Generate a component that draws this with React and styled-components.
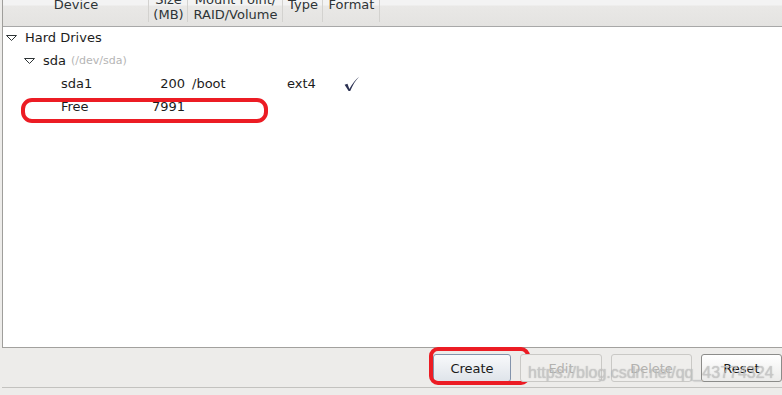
import styled, { createGlobalStyle } from "styled-components";

const GlobalStyle = createGlobalStyle`
  html, body {
    margin: 0;
    padding: 0;
    background: #edecea;
  }
  body {
    font-family: "DejaVu Sans", "Liberation Sans", sans-serif;
    font-size: 13px;
    color: #1c1c1c;
  }
`;

const columns = [
    { key: "device", title: ["Device"], width: 146 },
    { key: "size", title: ["Size", "(MB)"], width: 39 },
    { key: "mount", title: ["Mount Point/", "RAID/Volume"], width: 95 },
    { key: "type", title: ["Type"], width: 40 },
    { key: "format", title: ["Format"], width: 57 },
];

const rows = [
    { level: 0, name: "Hard Drives", open: true },
    { level: 1, name: "sda", note: "(/dev/sda)", open: true },
    { level: 2, name: "sda1", size: "200", mount: "/boot", type: "ext4", format: true },
    { level: 2, name: "Free", size: "7991", marked: true },
];

const buttons = [
    { label: "Create", kind: "focus", width: 78, marked: true },
    { label: "Edit", kind: "off", width: 82 },
    { label: "Delete", kind: "off", width: 81 },
    { label: "Reset", kind: "normal", width: 81 },
];

export default function App() {
    return (
        <Page>
            <GlobalStyle />
            <TreePanel>
                <Header>
                    {columns.map((c) => (
                        <HeaderCell key={c.key} w={c.width} stacked={c.title.length > 1}>
                            <HeaderLabel>
                                {c.title.map((t) => <span key={t}>{t}</span>)}
                            </HeaderLabel>
                        </HeaderCell>
                    ))}
                    <HeaderFill />
                </Header>
                <Rows>
                    {rows.map((r) => (
                        <Row key={r.name}>
                            <DeviceCell level={r.level}>
                                {r.open ? (
                                    <Expander viewBox="0 0 11 6">
                                        <polygon points="0.5,0.5 10.5,0.5 5.5,5.5" fill="none" stroke="#2e3436" strokeWidth="1" />
                                    </Expander>
                                ) : <Spacer />}
                                <span>{r.name}</span>
                                {r.note && <Note>{r.note}</Note>}
                            </DeviceCell>
                            <SizeCell>{r.size}</SizeCell>
                            <TextCell>{r.mount}</TextCell>
                            <TextCell>{r.type}</TextCell>
                            <CheckCell>
                                {r.format && (
                                    <svg width="17" height="16" viewBox="0 0 16 15">
                                        <path d="M1.5 8.2 L4.2 7.2 L6 12.3 C8.5 7.5 11.5 3.5 15.2 0.6 C11.8 4 9 8.5 6.8 14.2 L5.3 14.2 Z" fill="#2b3152" />
                                    </svg>
                                )}
                            </CheckCell>
                            {r.marked && <Marker />}
                        </Row>
                    ))}
                </Rows>
            </TreePanel>
            <ButtonBar>
                {buttons.map((b) => (
                    <ActionButton key={b.label} kind={b.kind} w={b.width} disabled={b.kind === "off"}>
                        {b.label}
                        {b.marked && <ButtonMarker />}
                    </ActionButton>
                ))}
                <Watermark>https://blog.csdn.net/qq_43774324</Watermark>
            </ButtonBar>
            <BottomRule />
        </Page>
    );
}

const Page = styled.div`
width: 782px;
height: 395px;
overflow: hidden;
display: flex;
flex-direction: column;
`;

const TreePanel = styled.div`
margin-left: 2px;
height: 348px;
box-sizing: border-box;
border-left: 1px solid #9f9e9b;
border-bottom: 1px solid #a2a19e;
background: #ffffff;
overflow: hidden;
flex-shrink: 0;
`;

const Header = styled.div`
display: flex;
height: 44px;
margin-top: -17px;
box-sizing: border-box;
border-bottom: 1px solid #a8a8a8;
background: linear-gradient(#f3f3f3 0, #f3f3f3 22px, #e9e8e6 23px, #e4e3e1 100%);
color: #2e3436;
`;

const HeaderCell = styled.div`
width: ${(p) => p.w}px;
flex-shrink: 0;
position: relative;
display: flex;
align-items: ${(p) => (p.stacked ? "flex-end" : "center")};
padding-bottom: ${(p) => (p.stacked ? "4px" : "0")};
box-sizing: border-box;
justify-content: center;
&::after {
    content: "";
    position: absolute;
    right: 0;
    top: 0;
    bottom: 4px;
    width: 1px;
    background: #d3d2cf;
}
`;

const HeaderFill = styled.div`
flex: 1;
`;

const HeaderLabel = styled.div`
display: flex;
flex-direction: column;
align-items: center;
line-height: 15px;
white-space: nowrap;
`;

const Rows = styled.div`
display: flex;
flex-direction: column;
margin-top: -1px;
`;

const Row = styled.div`
position: relative;
display: grid;
grid-template-columns: 146px 39px 95px 40px 57px;
height: 23px;
align-items: center;
white-space: nowrap;
`;

const DeviceCell = styled.div`
display: flex;
align-items: center;
padding-left: ${(p) => p.level * 18 + 3}px;
`;

const Expander = styled.svg`
width: 11px;
height: 6px;
margin-right: 8px;
flex-shrink: 0;
`;

const Spacer = styled.span`
width: 19px;
flex-shrink: 0;
`;

const Note = styled.span`
font-size: 11px;
color: #b5b5b5;
margin-left: 5px;
`;

const SizeCell = styled.div`
text-align: right;
padding-right: 3px;
`;

const TextCell = styled.div`
padding-left: 4px;
`;

const CheckCell = styled.div`
display: flex;
justify-content: center;
padding-top: 1px;
`;

const Marker = styled.div`
position: absolute;
left: 18px;
top: 3px;
width: 247px;
height: 25px;
box-sizing: border-box;
border: 4px solid #ec1c24;
border-radius: 11px;
`;

const ButtonBar = styled.div`
position: relative;
display: flex;
justify-content: flex-end;
gap: 9px;
padding: 6px 0 0 0;
height: 39px;
box-sizing: border-box;
flex-shrink: 0;
`;

const ActionButton = styled.button`
position: relative;
width: ${(p) => p.w}px;
height: 28px;
box-sizing: border-box;
border-radius: 3px;
font-family: "DejaVu Sans", "Liberation Sans", sans-serif;
font-size: 13px;
padding: 0;
border: 1px solid ${(p) => (p.kind === "off" ? "#cac9c6" : p.kind === "focus" ? "#8393ab" : "#8c8c8a")};
color: ${(p) => (p.kind === "off" ? "#b3b2af" : "#1a1a1a")};
background: ${(p) =>
        p.kind === "off"
            ? "#efeeec"
            : p.kind === "focus"
                ? "linear-gradient(#f8f9fb, #dfe4ea)"
                : "linear-gradient(#ffffff, #ebebea)"};
`;

const ButtonMarker = styled.span`
position: absolute;
left: -5px;
top: -8px;
width: 101px;
height: 38px;
box-sizing: border-box;
border: 4px solid #ec1c24;
border-radius: 9px;
`;

const Watermark = styled.div`
position: absolute;
left: 528px;
top: 16px;
font-family: "Liberation Sans", sans-serif;
font-size: 16px;
color: rgba(205, 205, 205, 0.75);
text-shadow: 0 0 1px rgba(110, 110, 110, 0.5);
white-space: nowrap;
pointer-events: none;
`;

const BottomRule = styled.div`
margin-left: 2px;
border-top: 1px solid #c3c2bf;
flex: 1;
`;
